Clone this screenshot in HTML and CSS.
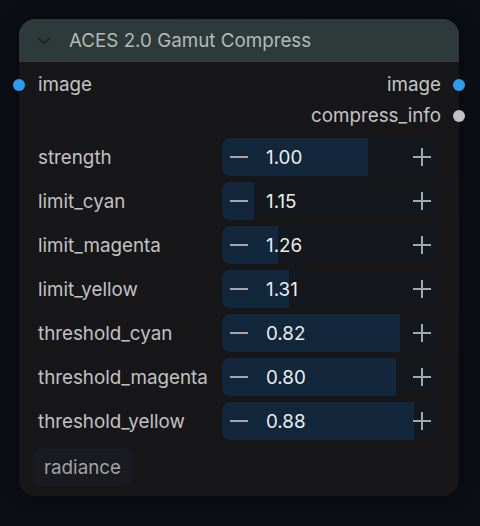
FILE: index.html
```html
<!DOCTYPE html>
<html>
<head>
<meta charset="utf-8">
<link rel="stylesheet" href="styles.css">
</head>
<body>
<div class="node">
  <div class="header">
    <svg class="chev" width="14" height="8" viewBox="0 0 14 8"><path d="M1 1 L7 6.5 L13 1" fill="none" stroke="#1e2527" stroke-width="1.8"/></svg>
    <span class="title">ACES 2.0 Gamut Compress</span>
  </div>
  <div class="content">
    <div class="slot">
      <span class="dot left blue"></span>
      <span class="slabel">image</span>
      <span class="spacer"></span>
      <span class="slabel">image</span>
      <span class="dot right blue"></span>
    </div>
    <div class="slot">
      <span class="spacer"></span>
      <span class="slabel">compress_info</span>
      <span class="dot right gray"></span>
    </div>
    <div class="widgets">
      <div class="wrow"><span class="wlabel">strength</span><div class="num"><div class="fill" style="width:67.5%"></div><span class="minus"></span><span class="val">1.00</span><span class="plus"></span></div></div>
      <div class="wrow"><span class="wlabel">limit_cyan</span><div class="num"><div class="fill" style="width:15%"></div><span class="minus"></span><span class="val">1.15</span><span class="plus"></span></div></div>
      <div class="wrow"><span class="wlabel">limit_magenta</span><div class="num"><div class="fill" style="width:26%"></div><span class="minus"></span><span class="val">1.26</span><span class="plus"></span></div></div>
      <div class="wrow"><span class="wlabel">limit_yellow</span><div class="num"><div class="fill" style="width:31%"></div><span class="minus"></span><span class="val">1.31</span><span class="plus"></span></div></div>
      <div class="wrow"><span class="wlabel">threshold_cyan</span><div class="num"><div class="fill" style="width:82.5%"></div><span class="minus"></span><span class="val">0.82</span><span class="plus"></span></div></div>
      <div class="wrow"><span class="wlabel">threshold_magenta</span><div class="num"><div class="fill" style="width:80.5%"></div><span class="minus"></span><span class="val">0.80</span><span class="plus"></span></div></div>
      <div class="wrow"><span class="wlabel">threshold_yellow</span><div class="num"><div class="fill" style="width:89%"></div><span class="minus"></span><span class="val">0.88</span><span class="plus"></span></div></div>
    </div>
    <div class="badge">radiance</div>
  </div>
</div>
</body>
</html>
```
FILE: styles.css
```css
html, body { margin: 0; padding: 0; }
body {
  width: 480px; height: 526px; overflow: hidden;
  background: radial-gradient(ellipse at 50% 50%, #11151c 0%, #0b0e14 70%);
  font-family: Inter, "Noto Sans", sans-serif;
  padding: 19px 0 0 19px;
  box-sizing: border-box;
}
.node {
  width: 440px; height: 477px;
  background: #17171a;
  border-radius: 16px;
  box-shadow: 0 0 14px rgba(0,0,0,0.5);
  display: flex; flex-direction: column;
}
.header {
  height: 43px;
  background: #2e3a39;
  border-radius: 16px 16px 0 0;
  display: flex; align-items: center;
  padding-left: 18px;
}
.chev { margin-right: 18px; margin-top: 1px; }
.title { color: #b3b9b8; font-size: 18.8px; }
.content { padding: 7px 0 0 0; display: flex; flex-direction: column; }
.slot {
  height: 31px; display: flex; align-items: center; position: relative;
  padding: 0 18px 0 19px;
}
.slabel { color: #c4c4c4; font-size: 18.8px; }
.spacer { flex: 1; }
.dot { position: absolute; width: 12px; height: 12px; border-radius: 50%; top: 9.5px; }
.dot.left { left: -6px; }
.dot.right { right: -6px; }
.blue { background: #2b9cf2; }
.gray { background: #c2c2c2; }
.widgets { display: flex; flex-direction: column; gap: 6px; margin-top: 7px; }
.wrow { display: flex; align-items: center; height: 38px; padding-left: 19px; }
.wlabel { width: 184px; color: #c2c2c2; font-size: 18.8px; }
.num {
  position: relative; width: 216px; height: 38px;
  background: #14171c; border-radius: 8px; overflow: hidden;
  display: flex; align-items: center;
}
.fill { position: absolute; left: 0; top: 0; bottom: 0; background: #12273b; }
.minus, .plus { position: relative; width: 18px; height: 18px; }
.minus { margin-left: 8px; }
.minus::before, .plus::before, .plus::after {
  content: ""; position: absolute; background: #a2a8ad;
}
.minus::before, .plus::before { left: 0; right: 0; top: 8px; height: 2px; }
.plus::after { top: 0; bottom: 0; left: 8px; width: 2px; }
.val { position: relative; color: #ececec; font-size: 18.8px; margin-left: 18px; flex: 1; }
.plus { margin-right: 7px; }
.badge {
  align-self: flex-start;
  margin: 9px 0 0 14px;
  height: 37px; padding: 0 11px;
  display: flex; align-items: center;
  background: #191b20; border-radius: 8px;
  color: #a3a3a3; font-size: 18.8px;
}
```
